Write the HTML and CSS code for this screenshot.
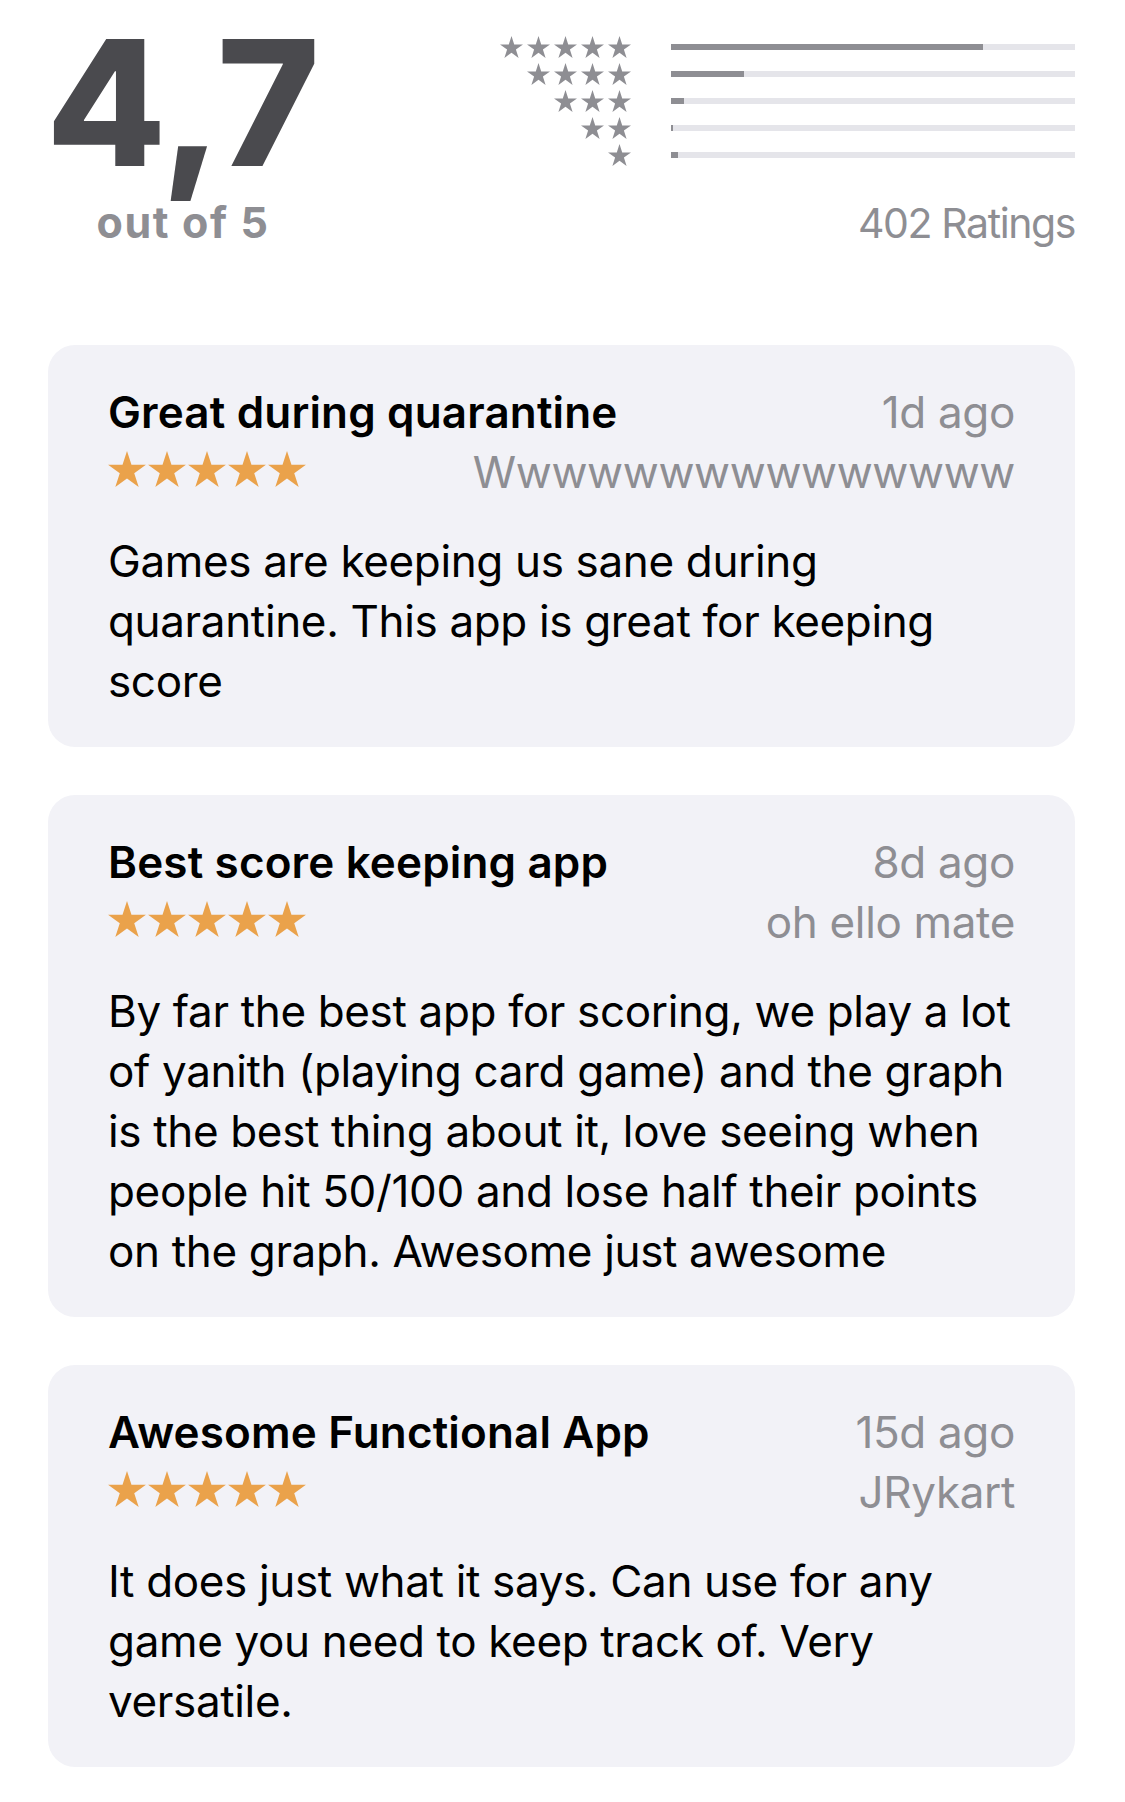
FILE: index.html
```html
<!DOCTYPE html>
<html lang="en">
<head>
<meta charset="utf-8">
<title>Ratings &amp; Reviews</title>
<link rel="stylesheet" href="styles.css">
</head>
<body>
<svg class="defs" aria-hidden="true">
  <symbol id="star" viewBox="2.45 0 95.1 90.45">
    <polygon points="50,0 61.23,34.55 97.55,34.55 68.17,55.9 79.39,90.45 50,69.1 20.61,90.45 31.83,55.9 2.45,34.55 38.77,34.55"/>
  </symbol>
</svg>
<div class="page">
  <section class="summary">
    <div class="score">
      <div class="score-value">4,7</div>
      <div class="score-max">out of 5</div>
    </div>
    <div class="breakdown">
      <div class="dist">
        <div class="dist-row">
          <div class="dist-stars"><svg><use href="#star"/></svg><svg><use href="#star"/></svg><svg><use href="#star"/></svg><svg><use href="#star"/></svg><svg><use href="#star"/></svg></div>
          <div class="bar"><div class="bar-fill" style="width:77.2%"></div></div>
        </div>
        <div class="dist-row">
          <div class="dist-stars"><svg><use href="#star"/></svg><svg><use href="#star"/></svg><svg><use href="#star"/></svg><svg><use href="#star"/></svg></div>
          <div class="bar"><div class="bar-fill" style="width:18%"></div></div>
        </div>
        <div class="dist-row">
          <div class="dist-stars"><svg><use href="#star"/></svg><svg><use href="#star"/></svg><svg><use href="#star"/></svg></div>
          <div class="bar"><div class="bar-fill" style="width:3.2%"></div></div>
        </div>
        <div class="dist-row">
          <div class="dist-stars"><svg><use href="#star"/></svg><svg><use href="#star"/></svg></div>
          <div class="bar"><div class="bar-fill" style="width:0.4%"></div></div>
        </div>
        <div class="dist-row">
          <div class="dist-stars"><svg><use href="#star"/></svg></div>
          <div class="bar"><div class="bar-fill" style="width:1.7%"></div></div>
        </div>
      </div>
      <div class="count">402 Ratings</div>
    </div>
  </section>

  <section class="reviews">
    <article class="review">
      <div class="review-row">
        <h3 class="review-title">Great during quarantine</h3>
        <span class="review-meta">1d ago</span>
      </div>
      <div class="review-row">
        <div class="review-stars"><svg><use href="#star"/></svg><svg><use href="#star"/></svg><svg><use href="#star"/></svg><svg><use href="#star"/></svg><svg><use href="#star"/></svg></div>
        <span class="review-meta">Wwwwwwwwwwwwwww</span>
      </div>
      <p class="review-body">Games are keeping us sane during quarantine. This app is great for keeping score</p>
    </article>

    <article class="review">
      <div class="review-row">
        <h3 class="review-title">Best score keeping app</h3>
        <span class="review-meta">8d ago</span>
      </div>
      <div class="review-row">
        <div class="review-stars"><svg><use href="#star"/></svg><svg><use href="#star"/></svg><svg><use href="#star"/></svg><svg><use href="#star"/></svg><svg><use href="#star"/></svg></div>
        <span class="review-meta">oh ello mate</span>
      </div>
      <p class="review-body">By far the best app for scoring, we play a lot of yanith (playing card game) and the graph is the best thing about it, love seeing when people hit 50/100 and lose half their points on the graph. Awesome just awesome</p>
    </article>

    <article class="review">
      <div class="review-row">
        <h3 class="review-title">Awesome Functional App</h3>
        <span class="review-meta">15d ago</span>
      </div>
      <div class="review-row">
        <div class="review-stars"><svg><use href="#star"/></svg><svg><use href="#star"/></svg><svg><use href="#star"/></svg><svg><use href="#star"/></svg><svg><use href="#star"/></svg></div>
        <span class="review-meta">JRykart</span>
      </div>
      <p class="review-body">It does just what it says. Can use for any game you need to keep track of. Very versatile.</p>
    </article>
  </section>
</div>
</body>
</html>
```

FILE: styles.css
```css
* { box-sizing: border-box; }

body {
  margin: 0;
  background: #ffffff;
  font-family: Inter, "Noto Sans", "Liberation Sans", sans-serif;
  color: #000;
}

.defs {
  position: absolute;
  width: 0;
  height: 0;
  overflow: hidden;
}

.page {
  padding: 0 50px 35px 48px;
}

/* ---------- summary ---------- */
.summary {
  display: flex;
  justify-content: space-between;
  align-items: flex-start;
}

.score {
  width: 270px;
  padding-top: 15px;
  display: flex;
  flex-direction: column;
  align-items: center;
}

.score-value {
  font-size: 175px;
  line-height: 175px;
  font-weight: 800;
  color: #4a4a4e;
}

.score-max {
  margin-top: 11px;
  font-size: 43px;
  line-height: 42px;
  font-weight: 700;
  letter-spacing: 1.6px;
  color: #8e8e93;
}

.breakdown {
  width: 575px;
  padding-top: 33px;
  display: flex;
  flex-direction: column;
  align-items: flex-end;
}

.dist {
  width: 100%;
}

.dist-row {
  display: grid;
  grid-template-columns: 131px 1fr;
  column-gap: 40px;
  align-items: center;
  height: 27px;
}

.dist-stars {
  display: flex;
  justify-content: flex-end;
  gap: 4px;
  color: #8e8e93;
}

.dist-stars svg {
  display: block;
  width: 23px;
  height: 22px;
  fill: currentColor;
}

.bar {
  height: 6px;
  background: #e5e5ea;
}

.bar-fill {
  height: 100%;
  background: #8e8e93;
}

.count {
  margin-top: 34px;
  font-size: 41px;
  line-height: 42px;
  letter-spacing: -1.4px;
  color: #8e8e93;
}

/* ---------- reviews ---------- */
.reviews {
  margin-top: 101px;
  display: flex;
  flex-direction: column;
  gap: 48px;
}

.review {
  background: #f2f2f7;
  border-radius: 27px;
  padding: 36.5px 60px 36px;
}

.review-row {
  display: flex;
  justify-content: space-between;
  align-items: center;
  gap: 20px;
  font-size: 44px;
  line-height: 60px;
}

.review-title {
  margin: 0;
  font-size: 44px;
  font-weight: 600;
  letter-spacing: 0.15px;
  color: #000;
  white-space: nowrap;
}

.review-meta {
  color: #8e8e93;
  letter-spacing: -0.35px;
  white-space: nowrap;
}

.review-stars {
  display: flex;
  gap: 2px;
  margin-bottom: 5px;
  color: #eaa24b;
}

.review-stars svg {
  display: block;
  width: 38px;
  height: 36px;
  fill: currentColor;
}

.review-body {
  margin: 29.5px 0 0;
  font-size: 44px;
  line-height: 60px;
  letter-spacing: -0.35px;
  color: #000;
}
```
